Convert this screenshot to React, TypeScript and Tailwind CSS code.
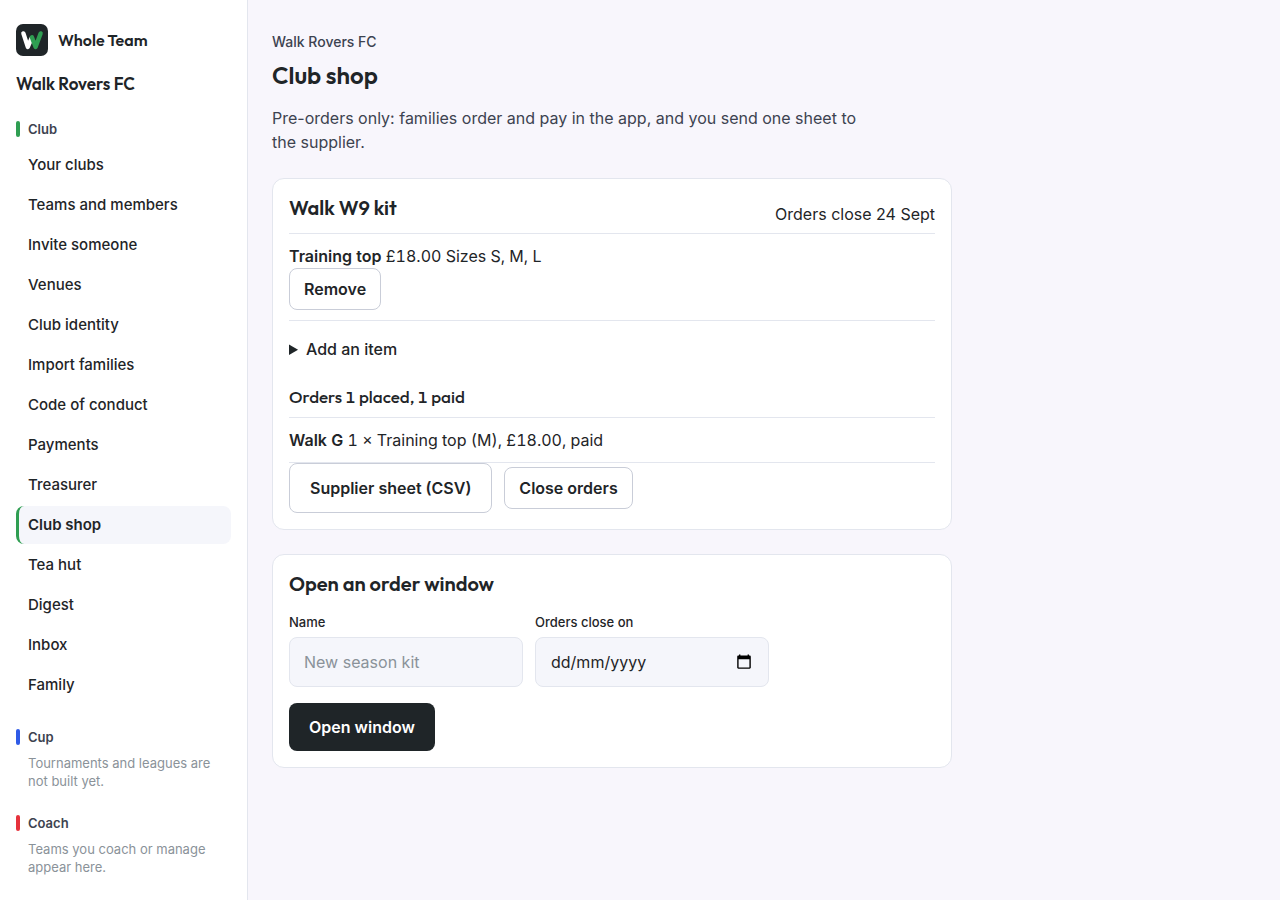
import type { ReactNode } from 'react';

const clubLinks = [
  'Your clubs', 'Teams and members', 'Invite someone', 'Venues', 'Club identity',
  'Import families', 'Code of conduct', 'Payments', 'Treasurer', 'Club shop',
  'Tea hut', 'Digest', 'Inbox', 'Family',
];

const display = "font-['Outfit','Lato',sans-serif]";

function Logo() {
  return (
    <svg viewBox="0 0 32 32" className="size-8" aria-hidden="true">
      <rect width="32" height="32" rx="7" fill="#1f2528" />
      <g fill="none" strokeWidth="4.4" strokeLinecap="round" strokeLinejoin="round">
        <path d="M7.400 9.400 11.800 22.900 15.400 14.500" stroke="#fff" />
        <path d="M15.900 13.200 19.600 22.900 24.600 9.400" stroke="#2f9e52" />
      </g>
    </svg>
  );
}

function CalendarIcon() {
  return (
    <svg viewBox="0 0 16 16" className="size-4" aria-hidden="true">
      <path
        fill="#000"
        fillRule="evenodd"
        d="M3 .4h1.400V1.600h7.200V.4H13v1.200h.6c.7 0 1.200.5 1.200 1.200v10.800c0 .7-.5 1.200-1.200 1.200H2.400c-.7 0-1.200-.5-1.200-1.200V2.800c0-.7.5-1.200 1.200-1.200H3zM2.600 5.200v8.200h10.800V5.200z"
      />
    </svg>
  );
}

function SectionLabel({ bar, children }: { bar: string; children: ReactNode }) {
  return (
    <h2 className="flex items-center gap-2 text-[13px] leading-[18px] font-semibold text-[#3d4350]">
      <span className={`h-4 w-1 rounded-[2px] ${bar}`} />
      {children}
    </h2>
  );
}

function Sidebar() {
  return (
    <aside className="w-[248px] shrink-0 border-r border-[#e3e6ee] bg-white px-4 py-6">
      <a href="#" className={`flex items-center gap-2.5 text-base font-semibold ${display}`}>
        <Logo />
        Whole Team
      </a>
      <p className={`mt-4 text-[17px] leading-6 font-semibold ${display}`}>Walk Rovers FC</p>
      <nav className="mt-6 flex flex-col gap-6">
        <section>
          <SectionLabel bar="bg-[#2f9e52]">Club</SectionLabel>
          <ul className="mt-2 flex flex-col gap-0.5">
            {clubLinks.map((label) => (
              <li key={label}>
                <a
                  href="#"
                  className={`flex h-[38px] items-center rounded-lg border-l-3 pl-[9px] text-[15px] ${
                    label === 'Club shop'
                      ? 'border-[#2f9e52] bg-[#f5f6fb] font-semibold'
                      : 'border-transparent font-medium'
                  }`}
                >
                  {label}
                </a>
              </li>
            ))}
          </ul>
        </section>
        <section>
          <SectionLabel bar="bg-[#2f5be7]">Cup</SectionLabel>
          <p className="mt-2 pl-3 text-[13px] leading-[18px] text-[#8a9299]">Tournaments and leagues are not built yet.</p>
        </section>
        <section>
          <SectionLabel bar="bg-[#e6323c]">Coach</SectionLabel>
          <p className="mt-2 pl-3 text-[13px] leading-[18px] text-[#8a9299]">Teams you coach or manage appear here.</p>
        </section>
      </nav>
    </aside>
  );
}

const card = 'rounded-xl border border-[#e3e6ee] bg-white p-4';
const outline = 'rounded-lg border border-[#c9cdd8] bg-white font-semibold';
const field = 'h-[50px] w-full rounded-lg border border-[#e3e6ee] bg-[#f5f6fb]';

export default function App() {
  return (
    <div className="flex min-h-screen bg-[#f8f6fc] font-['Inter',sans-serif] text-base text-[#1f2528]">
      <Sidebar />
      <main className="min-w-0 flex-1 px-6 py-8">
        <div className="max-w-[680px]">
          <p className="text-sm font-medium text-[#3d4350]">Walk Rovers FC</p>
          <h1 className={`mt-2 text-2xl leading-[30px] font-semibold ${display}`}>Club shop</h1>
          <p className="mt-4 max-w-[600px] leading-6 text-[#3d4350]">
            Pre-orders only: families order and pay in the app, and you send one sheet to the supplier.
          </p>

          <section className={`mt-6 ${card}`}>
            <div className="flex items-end justify-between border-b border-[#e3e6ee] pb-[7px]">
              <h2 className={`pb-[5px] text-xl leading-[26px] font-semibold ${display}`}>Walk W9 kit</h2>
              <span>Orders close 24 Sept</span>
            </div>
            <div className="border-b border-[#e3e6ee] py-2.5 tabular-nums">
              <p><strong className="font-semibold">Training top</strong> £18.00 Sizes S, M, L</p>
              <button type="button" className={`block h-[42px] px-3.5 ${outline}`}>Remove</button>
            </div>
            <details className="mt-4">
              <summary className="font-medium">Add an item</summary>
            </details>
            <h3 className={`mt-6 border-b border-[#e3e6ee] pb-2 text-[17px] leading-6 font-medium tabular-nums ${display}`}>
              Orders 1 placed, 1 paid
            </h3>
            <p className="border-b border-[#e3e6ee] py-2.5 tabular-nums">
              <strong className="font-semibold">Walk G</strong> 1 × Training top (M), £18.00, paid
            </p>
            <div className="flex items-center gap-3">
              <button type="button" className={`h-[50px] px-5 ${outline}`}>Supplier sheet (CSV)</button>
              <button type="button" className={`h-[42px] px-3.5 ${outline}`}>Close orders</button>
            </div>
          </section>

          <section className={`mt-6 ${card}`}>
            <h2 className={`text-xl leading-[26px] font-semibold ${display}`}>Open an order window</h2>
            <form>
              <div className="mt-4 flex gap-3">
                <div className="w-[234px]">
                  <label htmlFor="name" className="mb-1.5 block text-[13px] leading-[18px] font-medium">Name</label>
                  <input
                    id="name"
                    type="text"
                    placeholder="New season kit"
                    className={`px-3.5 placeholder:text-[#8a9299] ${field}`}
                  />
                </div>
                <div className="w-[234px]">
                  <label htmlFor="close" className="mb-1.5 block text-[13px] leading-[18px] font-medium">Orders close on</label>
                  <div className={`flex items-center pr-4 pl-[15px] ${field}`}>
                    <input
                      id="close"
                      type="text"
                      inputMode="numeric"
                      placeholder="dd/mm/yyyy"
                      className="h-full min-w-0 flex-1 placeholder:text-[#1f2528]"
                    />
                    <button type="button" aria-label="Choose date">
                      <CalendarIcon />
                    </button>
                  </div>
                </div>
              </div>
              <button type="button" className="mt-4 h-12 rounded-lg bg-[#1f2528] px-5 font-semibold text-white">Open window</button>
            </form>
          </section>
        </div>
      </main>
    </div>
  );
}
